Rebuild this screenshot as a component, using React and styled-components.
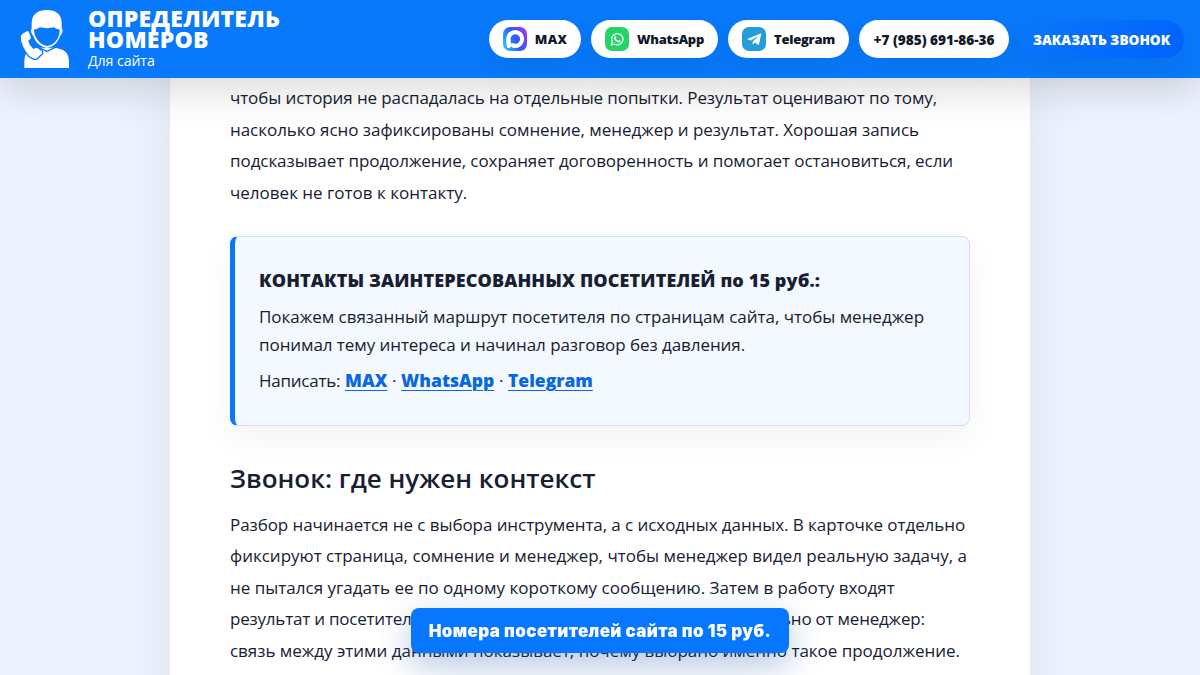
import React from "react";
import styled, { createGlobalStyle } from "styled-components";

const GlobalStyle = createGlobalStyle`
  * {
    box-sizing: border-box;
  }

  body {
    margin: 0;
    height: 675px;
    overflow: hidden;
    background-color: #edf4ff;
    color: #172033;
    font-family: "Open Sans", "Noto Sans", sans-serif;
    font-size: 17px;
  }

  p,
  h2 {
    margin: 0;
  }
`;

const Page = styled.div`
  height: 675px;
  overflow: hidden;
  display: flex;
  flex-direction: column;
`;

const Header = styled.header`
  position: relative;
  z-index: 2;
  flex: none;
  display: flex;
  align-items: center;
  justify-content: space-between;
  height: 78px;
  padding: 0 16px 0 20px;
  background-color: #0879fb;
  box-shadow: 0 12px 40px rgba(0, 0, 0, 0.15);
`;

const Brand = styled.a`
  display: flex;
  align-items: center;
  gap: 18px;
  color: #fff;
  text-decoration: none;
`;

const BrandText = styled.div`
  display: flex;
  flex-direction: column;
  padding-top: 1px;
`;

const BrandName = styled.span`
  font-size: 23px;
  font-weight: 800;
  line-height: 21px;
  letter-spacing: 0.22px;
`;

const BrandNote = styled.span`
  font-size: 14.2px;
  line-height: 21px;
  letter-spacing: -0.1px;
`;

const Nav = styled.nav`
  display: flex;
  gap: 10px;
`;

const Pill = styled.a`
  display: flex;
  align-items: center;
  justify-content: center;
  gap: 8px;
  width: ${(props) => props.$width}px;
  height: 38px;
  border-radius: 19px;
  background: ${(props) => (props.$primary ? "linear-gradient(135deg, #0a78f8, #0062ff)" : "#fff")};
  color: ${(props) => (props.$primary ? "#fff" : "#111827")};
  box-shadow: 0 10px 24px rgba(15, 23, 42, 0.08);
  font-size: ${(props) => props.$size || 13}px;
  font-weight: 800;
  letter-spacing: ${(props) => props.$spacing || 0}px;
  text-decoration: none;
  white-space: nowrap;
`;

const Article = styled.main`
  width: 860px;
  height: 900px;
  flex: none;
  align-self: center;
  padding: 4px 60px 0;
  background-color: #fff;
  box-shadow: 0 0 54px rgba(15, 23, 42, 0.08);
`;

const Paragraph = styled.p`
  line-height: 31.5px;
`;

const Line = styled.span`
  display: block;
  white-space: nowrap;
  letter-spacing: ${(props) => props.$spacing || 0}px;
`;

const Card = styled.section`
  display: flex;
  flex-direction: column;
  gap: 8px;
  height: 190px;
  margin: 28px 0 34px;
  padding: 29px 24px 0;
  border: 1px solid #cfe2fd;
  border-left: 5px solid #0877ff;
  border-radius: 8px;
  background-color: #f4f8ff;
  box-shadow: 0 12px 34px rgba(15, 23, 42, 0.05);
  line-height: 28px;
`;

const CardTitle = styled.p`
  margin-bottom: 0.6px;
  font-size: 18px;
  font-weight: 800;
  letter-spacing: 0.12px;
`;

const Contacts = styled.p`
  margin-top: -0.6px;
  letter-spacing: -0.24px;
  word-spacing: 0.6px;
`;

const CardLink = styled.a`
  color: #0868e0;
  font-size: 17.5px;
  font-weight: 800;
  letter-spacing: 0;
  text-decoration: underline;
  text-decoration-thickness: 1px;
  text-underline-offset: 3px;
`;

const Title = styled.h2`
  margin-bottom: 12.6px;
  font-size: 26px;
  font-weight: 600;
  line-height: 36px;
`;

const Offer = styled.button`
  position: fixed;
  z-index: 3;
  left: 411px;
  bottom: 22px;
  width: 378px;
  height: 45px;
  padding: 0;
  border: none;
  border-radius: 8px;
  background-color: #0877ff;
  color: #fff;
  box-shadow: 0 12px 34px rgba(8, 70, 160, 0.3);
  font-family: Inter, "Liberation Sans", sans-serif;
  font-size: 17px;
  font-weight: 900;
  letter-spacing: 0.38px;
  white-space: nowrap;
`;

const CallerIcon = () => (
  <svg width="50" height="58" viewBox="60 30 150 174">
    <path
      fill="#fff"
      d="M73 204V182Q74 158 90 151L112 143H167L189 150Q206 158 207 184V204Z"
    />
    <path
      fill="#fff"
      d="M95 82V66Q98 31 141 30Q182 31 185 66V84Q190 89 186 100Q183 106 180 108Q174 128 158 138L141 144L124 138Q106 128 100 108Q95 105 93 94Q93 88 95 85Z"
    />
    <path
      fill="#0879fb"
      d="M102 88Q112 89 119 82Q142 87 162 82Q170 89 179 88Q180 111 165 127Q142 149 118 127Q102 110 102 88Z"
    />
    <path
      fill="none"
      stroke="#0879fb"
      strokeWidth="4"
      d="M108 139Q124 145 141 154Q158 145 174 139"
    />
    <path
      fill="#fff"
      stroke="#0879fb"
      strokeWidth="4"
      d="M65 101L80 91Q86 91 89 96L95 113Q95 118 87 123Q90 136 101 145Q108 139 114 143L127 153Q130 158 126 163L111 177Q101 182 86 169Q61 139 60 110Q60 105 65 101Z"
    />
  </svg>
);

const MaxIcon = () => (
  <svg width="24" height="24" viewBox="0 0 24 24">
    <defs>
      <linearGradient id="max" x1="0" y1="0.75" x2="1" y2="0.25">
        <stop offset="0" stopColor="#22c5ff" />
        <stop offset="0.5" stopColor="#2f5bfb" />
        <stop offset="1" stopColor="#9a3bf0" />
      </linearGradient>
    </defs>
    <rect width="24" height="24" rx="7" fill="url(#max)" />
    <path
      fill="#fff"
      fillRule="evenodd"
      d="M12.2 2.9A9 9 0 1 1 12 21Q9.800 21 8.200 19.700Q6.600 21.300 4.300 21.100Q3 16.800 3.100 12A9 9 0 0 1 12.200 2.900ZM12.200 7.200A4.800 4.800 0 0 0 7.500 12Q7.500 14.800 8.400 16.800Q9.200 16.600 9.800 16.100A4.800 4.800 0 1 0 12.200 7.200Z"
    />
  </svg>
);

const WhatsAppIcon = () => (
  <svg width="24" height="24" viewBox="0 0 24 24">
    <rect width="24" height="24" rx="7" fill="#25d366" />
    <path
      fill="none"
      stroke="#fff"
      strokeWidth="1.2"
      d="M6.300 17.900L7.200 14.800A5.700 5.700 0 1 1 9.300 17.100Z"
    />
    <path
      fill="#fff"
      d="M9.700 9.200Q10.300 8.700 10.700 9.300L11.300 10.700Q11.300 11.100 10.700 11.700Q11.600 13.200 13.200 13.900L14 13Q14.300 12.800 15.700 13.700Q15.800 15 14.300 15.500Q12.700 15.700 10.500 13.700Q8 11.200 9.700 9.200Z"
    />
  </svg>
);

const TelegramIcon = () => (
  <svg width="24" height="24" viewBox="0 0 24 24">
    <rect width="24" height="24" rx="7" fill="#229ed9" />
    <path
      fill="#fff"
      d="M18.700 6.500L5.700 11.700Q4.900 12.200 5.800 12.600L9 13.600L16.400 8.900Q17 8.700 16.600 9.100L10.700 14.500L10.500 17.300Q10.900 17.400 11.300 17L12.900 15.500L16 17.800Q16.800 18.100 17 17.200L19.200 7.100Q19.300 6.300 18.700 6.500Z"
    />
  </svg>
);

const App = () => {
  return (
    <Page>
      <GlobalStyle />
      <Header>
        <Brand>
          <CallerIcon />
          <BrandText>
            <BrandName>ОПРЕДЕЛИТЕЛЬ</BrandName>
            <BrandName>НОМЕРОВ</BrandName>
            <BrandNote>Для сайта</BrandNote>
          </BrandText>
        </Brand>
        <Nav>
          <Pill $width={92} $spacing={0.4}>
            <MaxIcon />
            MAX
          </Pill>
          <Pill $width={127} $spacing={-0.27}>
            <WhatsAppIcon />
            WhatsApp
          </Pill>
          <Pill $width={121} $spacing={-0.27}>
            <TelegramIcon />
            Telegram
          </Pill>
          <Pill $width={150} $size={13.6}>+7 (985) 691-86-36</Pill>
          <Pill $width={165} $size={13.6} $primary>ЗАКАЗАТЬ ЗВОНОК</Pill>
        </Nav>
      </Header>

      <Article>
        <Paragraph>
          <Line $spacing={-0.104}>чтобы история не распадалась на отдельные попытки. Результат оценивают по тому,</Line>
          <Line $spacing={-0.043}>насколько ясно зафиксированы сомнение, менеджер и результат. Хорошая запись</Line>
          <Line $spacing={-0.071}>подсказывает продолжение, сохраняет договоренность и помогает остановиться, если</Line>
          <Line>человек не готов к контакту.</Line>
        </Paragraph>

        <Card>
          <CardTitle>КОНТАКТЫ ЗАИНТЕРЕСОВАННЫХ ПОСЕТИТЕЛЕЙ по 15 руб.:</CardTitle>
          <p>
            <Line $spacing={-0.024}>Покажем связанный маршрут посетителя по страницам сайта, чтобы менеджер</Line>
            <Line $spacing={-0.068}>понимал тему интереса и начинал разговор без давления.</Line>
          </p>
          <Contacts>
            Написать: <CardLink>MAX</CardLink> · <CardLink>WhatsApp</CardLink> · <CardLink>Telegram</CardLink>
          </Contacts>
        </Card>

        <Title>Звонок: где нужен контекст</Title>
        <Paragraph>
          <Line $spacing={-0.072}>Разбор начинается не с выбора инструмента, а с исходных данных. В карточке отдельно</Line>
          <Line $spacing={-0.01}>фиксируют страница, сомнение и менеджер, чтобы менеджер видел реальную задачу, а</Line>
          <Line>не пытался угадать ее по одному короткому сообщению. Затем в работу входят</Line>
          <Line $spacing={-0.215}>результат и посетитель. Законченную запись рассматривают отдельно от менеджер:</Line>
          <Line $spacing={-0.02}>связь между этими данными показывает, почему выбрано именно такое продолжение.</Line>
        </Paragraph>
      </Article>

      <Offer>Номера посетителей сайта по 15 руб.</Offer>
    </Page>
  );
};

export default App;
